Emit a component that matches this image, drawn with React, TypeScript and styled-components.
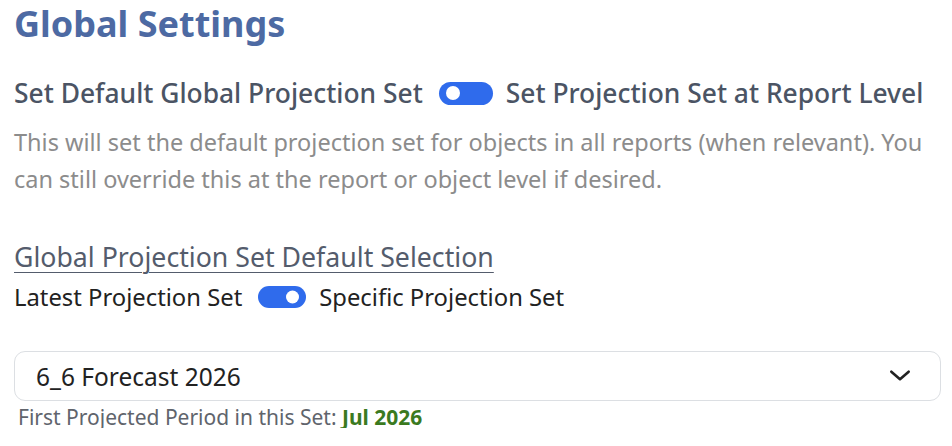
import React from 'react'
import styled, { createGlobalStyle } from 'styled-components'

const GlobalStyle = createGlobalStyle`
  html, body {
    margin: 0;
    padding: 0;
    background: #ffffff;
  }
  body {
    font-family: 'Noto Sans', 'Open Sans', sans-serif;
  }
`

const Page = styled.div`
  padding: 2px 11px 0 14px;
  display: flex;
  flex-direction: column;
`

const Title = styled.h1`
  margin: 0;
  font-size: 36px;
  font-weight: 700;
  color: #4d6aa3;
  line-height: 44px;
`

const ToggleRow = styled.div<{ $big?: boolean }>`
  display: flex;
  align-items: center;
  font-size: ${(p) => (p.$big ? '26.4px' : '23.8px')};
  color: ${(p) => (p.$big ? '#4b5464' : '#222222')};
  font-weight: ${(p) => (p.$big ? 500 : 400)};
  line-height: 30px;
  margin-top: ${(p) => (p.$big ? '32px' : '10px')};
`

const Track = styled.span<{ $on: boolean; $w: number; $h: number }>`
  position: relative;
  display: inline-block;
  width: ${(p) => p.$w}px;
  height: ${(p) => p.$h}px;
  margin: 0 13px 0 16px;
  border-radius: ${(p) => p.$h / 2}px;
  background: #2f6bec;
  flex-shrink: 0;

  &::after {
    content: '';
    position: absolute;
    top: 50%;
    transform: translateY(-50%);
    width: ${(p) => p.$h - 9}px;
    height: ${(p) => p.$h - 9}px;
    border-radius: 50%;
    background: #ffffff;
    ${(p) => (p.$on ? 'right: 7px;' : 'left: 7px;')}
  }
`

const Description = styled.p`
  margin: 16px 0 0;
  font-size: 23.5px;
  line-height: 37px;
  color: #8c8c8c;
`

const SectionHeading = styled.h2`
  margin: 44px 0 0;
  font-size: 26.7px;
  font-weight: 400;
  color: #545c6c;
  text-decoration: underline;
  text-underline-offset: 5px;
  text-decoration-thickness: 1px;
  line-height: 30px;
`

const SelectBox = styled.div`
  box-sizing: border-box;
  margin-top: 39px;
  height: 50px;
  border: 1.5px solid #dcdfe3;
  border-radius: 11px;
  display: flex;
  align-items: center;
  justify-content: space-between;
  padding: 0 27px 0 21px;
  font-size: 24.5px;
  color: #222222;
`

const Chevron = styled.svg`
  width: 26px;
  height: 26px;
`

const Footnote = styled.div`
  margin: 5px 0 0 4px;
  font-size: 21px;
  color: #60646c;
  line-height: 22px;
`

const Highlight = styled.span`
  color: #3b7a1f;
  font-weight: 700;
`

const App: React.FC = () => {
  return (
    <>
      <GlobalStyle />
      <Page>
        <Title>Global Settings</Title>
        <ToggleRow $big>
          <span>Set Default Global Projection Set</span>
          <Track $on={false} $w={54} $h={23} />
          <span>Set Projection Set at Report Level</span>
        </ToggleRow>
        <Description>
          This will set the default projection set for objects in all reports (when relevant). You
          can still override this at the report or object level if desired.
        </Description>
        <SectionHeading>Global Projection Set Default Selection</SectionHeading>
        <ToggleRow>
          <span>Latest Projection Set</span>
          <Track $on $w={48} $h={22} />
          <span>Specific Projection Set</span>
        </ToggleRow>
        <SelectBox>
          <span>6_6 Forecast 2026</span>
          <Chevron viewBox="0 0 24 24" fill="none" stroke="#222" strokeWidth="2.4" strokeLinecap="round" strokeLinejoin="round">
            <path d="M4 8l8 7 8-7" />
          </Chevron>
        </SelectBox>
        <Footnote>
          First Projected Period in this Set: <Highlight>Jul 2026</Highlight>
        </Footnote>
      </Page>
    </>
  )
}

export default App
